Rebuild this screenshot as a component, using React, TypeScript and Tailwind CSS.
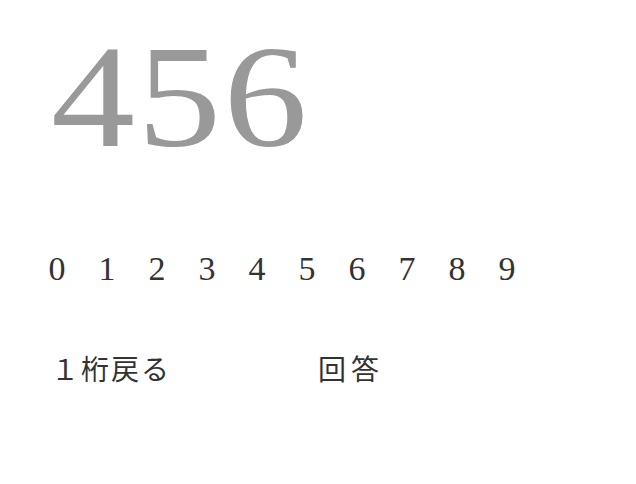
export default function App() {
  const digits = [0, 1, 2, 3, 4, 5, 6, 7, 8, 9];
  return (
    <div className="w-[636px] h-[484px] bg-white relative overflow-hidden" style={{ fontFamily: '"Liberation Serif", "Noto Sans CJK JP", serif' }}>
      <div className="pt-[24px] pl-[51px] h-[170px] text-[146px] leading-none text-[#999999]">
        <span className="inline-block origin-left scale-x-[1.15] tracking-[2px]">456</span>
      </div>
      <div className="mt-[82px] pl-[32px] flex text-[34px] leading-none text-[#333333]">
        {digits.map((d) => (
          <div key={d} className="w-[50px] text-center">{d}</div>
        ))}
      </div>
      <div className="mt-[71px] flex text-[28px] leading-none text-[#333333]">
        <div className="ml-[51px] w-[267px] tracking-[2px]">１桁戻る</div>
        <div className="tracking-[5px]">回答</div>
      </div>
    </div>
  );
}
